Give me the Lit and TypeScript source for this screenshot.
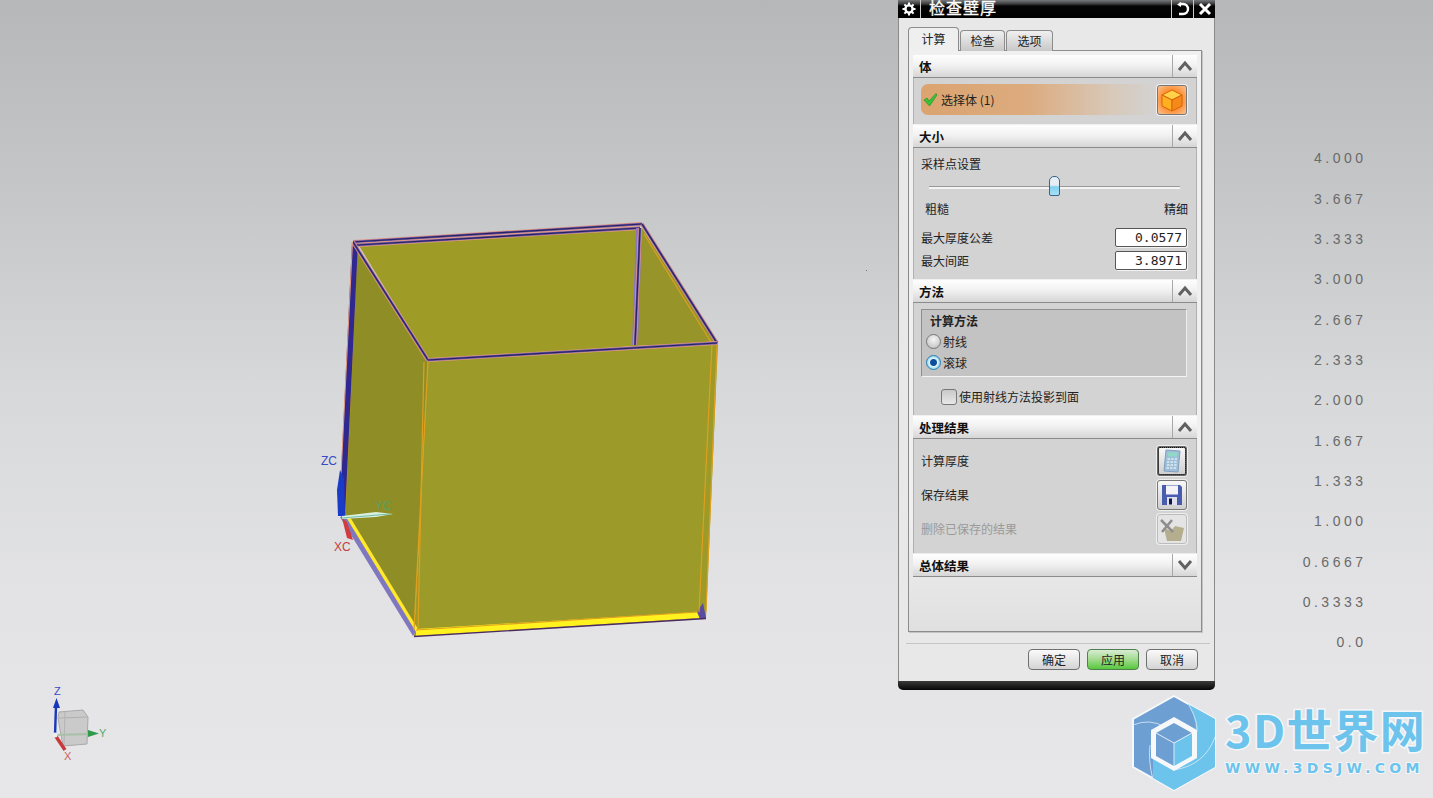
import { LitElement, html, css, svg } from 'lit';
import { customElement } from 'lit/decorators.js';

const LEGEND = ['4.000', '3.667', '3.333', '3.000', '2.667', '2.333', '2.000', '1.667', '1.333', '1.000', '0.6667', '0.3333', '0.0'];

// rim edge of the shell: pink outline, dark core, purple inner side
const rim = (x1: number, y1: number, x2: number, y2: number) => svg`
  <line x1=${x1} y1=${y1} x2=${x2} y2=${y2} stroke="#e09a84" stroke-width="3.8"/>
  <line x1=${x1} y1=${y1} x2=${x2} y2=${y2} stroke="#6d58a8" stroke-width="2.4"/>
  <line x1=${x1} y1=${y1} x2=${x2} y2=${y2} stroke="#262060" stroke-width="1.2"/>
`;

const orange = (x1: number, y1: number, x2: number, y2: number) => svg`
  <line x1=${x1} y1=${y1} x2=${x2} y2=${y2} stroke="#e0a01e" stroke-width="1.2"/>
`;

const chevron = (up: boolean) => html`
  <svg width="16" height="12" viewBox="0 0 16 12">
    <polyline points=${up ? '2,10 8,3 14,10' : '2,2 8,9 14,2'} fill="none" stroke="#606060" stroke-width="3"/>
  </svg>`;

@customElement('app-root')
export class AppRoot extends LitElement {
  static styles = css`
    :host {
      display: block;
      width: 1433px;
      height: 798px;
      overflow: hidden;
      position: relative;
      font-family: "Noto Sans CJK SC", "Liberation Sans", sans-serif;
      font-size: 12px;
      color: #222;
      background: linear-gradient(180deg, #b5b7b9 0%, #c6c7c9 25%, #d8d9db 50%, #e3e3e5 75%, #e7e7e9 100%);
    }
    .scene { position: absolute; left: 0; top: 0; }

    .legend {
      position: absolute;
      right: 70px;
      top: 148.3px;
      display: flex;
      flex-direction: column;
      align-items: flex-end;
      font-family: "Liberation Sans", sans-serif;
      font-size: 14px;
      letter-spacing: 3.5px;
      color: #6a6a6a;
    }
    .legend div { height: 40.33px; line-height: 20px; margin-right: -3.5px; }

    .dialog {
      position: absolute;
      left: 898px;
      top: 0;
      width: 317px;
      height: 690px;
      display: flex;
      flex-direction: column;
    }
    .titlebar {
      height: 18px;
      flex: none;
      display: flex;
      color: #fff;
      background: linear-gradient(180deg, #77787a 0, #3a3a3a 4px, #050505 6px, #000 100%);
    }
    .titlebar .gear { width: 23px; display: flex; justify-content: center; align-items: center; border-right: 1px solid #ccc; box-sizing: border-box; }
    .titlebar .name { flex: 1; padding-left: 8px; font-size: 16px; line-height: 14px; letter-spacing: 1px; -webkit-text-stroke: 0.3px #fff; }
    .titlebar .tool { width: 22px; display: flex; justify-content: center; align-items: center; border-left: 1px solid #ccc; box-sizing: border-box; }
    .body {
      flex: 1;
      box-sizing: border-box;
      padding: 9px 12px 0 9px;
      display: flex;
      flex-direction: column;
      border-left: 1px solid #8a8a8a;
      border-right: 1px solid #8a8a8a;
      background: #e8e8e8;
    }
    .tabs { display: flex; height: 24px; align-items: flex-end; flex: none; position: relative; z-index: 1; margin-bottom: -1px; }
    .tab {
      width: 45px;
      height: 21px;
      box-sizing: border-box;
      margin-left: 1px;
      padding-bottom: 2px;
      display: flex;
      align-items: center;
      justify-content: center;
      border: 1px solid #8c8c8c;
      border-bottom: none;
      border-radius: 4px 4px 0 0;
      background: linear-gradient(180deg, #f0f0f0, #c8c8c8);
    }
    .tab.last { width: 47px; margin-left: 1px; }
    .tab.active {
      margin-left: 0;
      height: 24px;
      width: 51px;
      background: #efefef;
    }
    .panel {
      height: 582px;
      flex: none;
      box-sizing: border-box;
      padding: 4px 4px 0;
      border: 1px solid #8c8c8c;
      background: linear-gradient(180deg, #f0f0f0 80%, #e0e0e0 100%);
      box-shadow: 1px 1px 0 #c4c4c4;
    }
    .head {
      height: 23px;
      box-sizing: border-box;
      display: flex;
      align-items: center;
      justify-content: space-between;
      padding-left: 6px;
      font-weight: 700;
      font-size: 12.5px;
      color: #111;
      border-bottom: 1px solid #8b8b8b;
      background: linear-gradient(180deg, #fefefe 0%, #f2f2f2 45%, #d6d6d6 100%);
    }
    .head .toggle {
      width: 24px;
      height: 22px;
      display: flex;
      align-items: center;
      justify-content: center;
      border-left: 1px solid #a8a8a8;
    }
    .content { background: #d3d3d3; box-sizing: border-box; padding: 0 9px 0 7px; margin-bottom: 1px; border-left: 1px solid #b0b0b0; border-right: 1px solid #b0b0b0; }

    .select-row { height: 46px; padding-top: 6px; display: flex; align-items: flex-start; justify-content: space-between; }
    .select-bar {
      width: 236px;
      height: 31px;
      box-sizing: border-box;
      padding-left: 2px;
      display: flex;
      align-items: center;
      gap: 3px;
      border-radius: 7px;
      background: linear-gradient(90deg, #dba470 0%, #dcab7e 45%, #d8c8b8 80%, #d3d3d3 100%);
    }
    .icon-btn {
      width: 30px;
      height: 30px;
      flex: none;
      box-sizing: border-box;
      display: flex;
      align-items: center;
      justify-content: center;
      border: 1px solid #777;
      border-radius: 3px;
      background: linear-gradient(180deg, #f8f8f8, #cfcfcf);
      box-shadow: 0 0 0 1px #eee;
    }
    .icon-btn.hot { margin-top: 1px; background: radial-gradient(circle, #ff7e14 35%, #f8c496 100%); }
    .icon-btn.focus { border: 2px solid #666; outline: 1px dotted #111; outline-offset: -2px; }
    .icon-btn.off { border-color: #bcbcbc; background: #e4e4e4; }

    .size { height: 131px; }
    .size .caption { height: 32px; padding-top: 6px; box-sizing: border-box; line-height: 20px; }
    .slider { height: 14px; margin: 0 7px 1px 8px; position: relative; display: flex; align-items: center; }
    .track { flex: 1; height: 3px; background: #f4f4f4; border-top: 1px solid #999; box-sizing: border-box; }
    .thumb {
      position: absolute;
      left: 120px;
      top: -4px;
      width: 11px;
      height: 20px;
      box-sizing: border-box;
      border: 1px solid #39648c;
      border-radius: 5px 5px 2px 2px;
      background: linear-gradient(180deg, #e6eef4 0 45%, #7fd0f2 55%, #a8e0f6 100%);
    }
    .ends { display: flex; justify-content: space-between; padding: 4px 0 0 4px; margin-right: -1px; height: 26px; box-sizing: border-box; line-height: 20px; }
    .field { display: flex; justify-content: space-between; align-items: center; height: 23px; }
    .field.first { margin-top: 5px; }
    .input {
      width: 72px;
      height: 19px;
      box-sizing: border-box;
      padding-right: 4px;
      text-align: right;
      font-family: "DejaVu Sans Mono", monospace;
      font-size: 13px;
      line-height: 17px;
      background: #fff;
      border: 1px solid #555;
      border-radius: 2px;
      box-shadow: 1px 1px 0 #f2f2f2;
    }

    .method { height: 112px; padding-top: 6px; }
    .group {
      height: 68px;
      box-sizing: border-box;
      padding: 1px 0 0 4px;
      background: #c3c3c3;
      border: 1px solid #8f8f8f;
      border-right-color: #eee;
      border-bottom-color: #f4f4f4;
    }
    .group .title { font-weight: 700; line-height: 20px; padding-left: 4px; }
    .radio { display: flex; align-items: center; height: 21px; gap: 2px; }
    .dot {
      width: 15px;
      height: 15px;
      box-sizing: border-box;
      border-radius: 50%;
      border: 1px solid #777;
      background: radial-gradient(circle at 50% 35%, #f4f4f4, #bbb);
    }
    .dot.on {
      border-color: #2a7fb0;
      background: radial-gradient(circle, #0d4f9a 0 3px, #e8f4fa 4px, #7fd0f0 7px);
    }
    .check { display: flex; align-items: center; gap: 2px; margin: 11px 0 0 20px; }
    .box {
      width: 16px;
      height: 16px;
      box-sizing: border-box;
      border: 1px solid #777;
      border-radius: 3px;
      background: linear-gradient(180deg, #c8c8c8, #e8e8e8);
    }

    .result { height: 114px; padding-top: 7px; display: flex; flex-direction: column; gap: 4px; }
    .result .row { display: flex; justify-content: space-between; align-items: center; height: 30px; }
    .result .row span { position: relative; top: -1px; }
    .muted { color: #9a9a9a; }

    .footer { border-top: 1px solid #c6c6c6; margin: 11px -8px 0 -2px; display: flex; justify-content: flex-end; gap: 7px; padding: 5px 12px 0 0; flex: none; }
    .btn {
      width: 52px;
      height: 21px;
      box-sizing: border-box;
      display: flex;
      align-items: center;
      justify-content: center;
      border: 1px solid #707070;
      border-radius: 4px;
      background: linear-gradient(180deg, #fafafa, #d4d4d4);
    }
    .btn.primary { border-color: #4f7f4f; background: linear-gradient(180deg, #d8ecd4 0%, #a8dc94 45%, #58c83e 100%); }
    .foot-bar {
      height: 9px;
      flex: none;
      background: linear-gradient(180deg, #3a3a3a, #050505);
      border-radius: 0 0 5px 5px;
    }

    .logo { position: absolute; left: 1132px; top: 695px; display: flex; align-items: flex-start; gap: 8px; }
    .brand { padding-top: 12px; display: flex; flex-direction: column; align-items: flex-start; }
    .brand .big {
      font-family: "Noto Sans CJK SC", sans-serif;
      font-weight: 700;
      font-size: 45px;
      line-height: 44px;
      letter-spacing: 1.5px;
      color: #6cc3ec;
      -webkit-text-stroke: 3px #f4f6f8;
      paint-order: stroke fill;
      white-space: nowrap;
    }
    .brand .url {
      margin-top: 10px;
      font-family: "DejaVu Sans", sans-serif;
      font-weight: 700;
      font-size: 14px;
      line-height: 14px;
      letter-spacing: 4.3px;
      color: #6cc3ec;
      -webkit-text-stroke: 2px #f4f6f8;
      paint-order: stroke fill;
      white-space: nowrap;
    }
  `;

  private renderModel() {
    return html`
      <svg class="scene" width="1433" height="798" viewBox="0 0 1433 798">
        <rect x="866" y="270" width="1" height="1" fill="#777"/>
        <!-- shell faces -->
        <polygon points="353,244 428,360 414,634 341,517" fill="#8f8d26"/>
        <polygon points="358,244 640,227 636,346 429,360" fill="#9e9c27"/>
        <polygon points="642,228 716,343 635,346" fill="#97942a"/>
        <polygon points="428,361 718,343 706,618 414,636" fill="#9c9a29"/>

        <!-- bottom strips -->
        <polygon points="416,629 698,612 700,618 416,636" fill="#fff21e"/>
        <polygon points="344,517 350,517 418,629 414,634" fill="#ffe92a"/>
        <polygon points="340,517 346,517 416,632 413,636" fill="#7f78c0"/>
        <polygon points="697,612 703,603 706,618 700,619" fill="#5a4aa0"/>
        <line x1="414" y1="636.5" x2="706" y2="618.5" stroke="#4a2a60" stroke-width="1.4"/>

        <!-- inner orange edges -->
        ${orange(357, 250, 345, 512)}
        ${orange(358, 252, 426, 360)}
        ${orange(644, 234, 711, 342)}
        ${orange(428, 361, 414, 630)}
        ${orange(424, 362, 418, 630)}
        ${orange(712, 344, 699, 612)}
        ${orange(717, 344, 706, 612)}
        ${orange(416, 630, 698, 612)}

        <!-- rims -->
        <polygon points="352,242 358,243 345,516 339,516" fill="#2e2890"/>
        ${rim(353, 242, 642, 224)}
        ${rim(358, 245, 640, 228)}
        ${rim(353, 242, 428, 360)}
        ${rim(642, 224, 717, 343)}
        ${rim(428, 360, 717, 343)}
        <polygon points="636,228 642,228 638,345 632,345" fill="#8d78c0"/>
        ${rim(640, 228, 635, 345)}
        <line x1="352.5" y1="242" x2="339" y2="516" stroke="#e59a80" stroke-width="1"/>

        <!-- work coordinate system -->
        <path d="M340,470 L337,490 L338,516 L345,516 L344,478 Z" fill="#1a3ac8"/>
        <polygon points="342,518 347,522 353,540 347,538" fill="#d23c3c"/>
        <polygon points="342,516 376,512 393,514 376,517 342,519" fill="#d8f0dc"/>
        <line x1="342" y1="518" x2="390" y2="514" stroke="#58b0a0" stroke-width="0.8"/>
        <text x="321" y="465" font-family="Liberation Sans, sans-serif" font-size="12" fill="#3848c8">ZC</text>
        <text x="375" y="510" font-family="Liberation Sans, sans-serif" font-size="12" fill="#5aa060">YC</text>
        <text x="334" y="551" font-family="Liberation Sans, sans-serif" font-size="12" fill="#c83c3c">XC</text>

        <!-- absolute triad -->
        <polygon points="59,712 83,710 88,717 87,744 63,746 58,718" fill="#c9cac9" stroke="#a8a9a8"/>
        <polyline points="59,718 88,717 M59,718" fill="none" stroke="#b0b0b0"/>
        <line x1="65" y1="712" x2="64" y2="746" stroke="#b4b4b4"/>
        <line x1="55" y1="735" x2="90" y2="734" stroke="#a8c0a8" stroke-width="2"/>
        <polygon points="88,730 99,733.5 88,737" fill="#2f9a4a"/>
        <line x1="55" y1="735" x2="56" y2="706" stroke="#1838b8" stroke-width="2.4"/>
        <polygon points="56.5,698 60,708 53,708" fill="#1838b8"/>
        <line x1="55" y1="735" x2="65" y2="750" stroke="#c83a3a" stroke-width="3.4"/>
        <circle cx="55" cy="735" r="2.5" fill="#eee"/>
        <text x="54" y="695" font-family="Liberation Sans, sans-serif" font-size="11" fill="#3848c8">Z</text>
        <text x="99" y="737" font-family="Liberation Sans, sans-serif" font-size="11" fill="#58a870">Y</text>
        <text x="64" y="760" font-family="Liberation Sans, sans-serif" font-size="11" fill="#d06060">X</text>
      </svg>`;
  }

  private renderLogo() {
    return html`
      <div class="logo">
        <svg width="85" height="97" viewBox="1132 695 85 97">
          <polygon points="1174,696 1215,719 1215,767 1174,790 1133,767 1133,719" fill="#6e9fd3" stroke="#f6f8fa" stroke-width="2"/>
          <path d="M1188,704 L1215,719 L1215,767 L1174,790 L1153,778 L1153,757 L1174,769 L1196,757 L1196,732 Q1196,716 1188,704 Z" fill="#6cc3ec"/>
          <path d="M1189,705 Q1200,725 1196,735 M1215,737 Q1205,765 1174,770 M1133,725 Q1150,718 1165,727 M1153,780 Q1148,760 1150,745" fill="none" stroke="#dfeef8" stroke-width="0.8"/>
          <polygon points="1174,717 1197,730 1197,758 1174,771 1151,758 1151,730" fill="#f6f8fa"/>
          <polygon points="1174,723 1192,733 1174,743 1156,733" fill="#6e9fd3"/>
          <polygon points="1156,733 1174,743 1174,766 1156,756" fill="#6e9fd3"/>
          <polygon points="1192,733 1192,756 1174,766 1174,743" fill="#6cc3ec"/>
          <path d="M1156,733 L1174,743 L1192,733 M1174,743 L1174,766" fill="none" stroke="#f6f8fa" stroke-width="0.8"/>
        </svg>
        <div class="brand">
          <div class="big">3D世界网</div>
          <div class="url">WWW.3DSJW.COM</div>
        </div>
      </div>`;
  }

  private section(title: string, body: unknown, open = true) {
    return html`
      <div class="head">
        <span>${title}</span>
        <span class="toggle">${chevron(open)}</span>
      </div>
      ${body}`;
  }

  private renderDialog() {
    const select = html`
      <div class="content select-row">
        <div class="select-bar">
          <svg width="15" height="15" viewBox="0 0 15 15"><path d="M1,8 L4,6 L6,9 L13,1.5 L14,3 L6.5,14 Z" fill="#35c435" stroke="#1e8a1e" stroke-width="0.6"/></svg>
          <span>选择体 (1)</span>
        </div>
        <div class="icon-btn hot">
          <svg width="24" height="24" viewBox="0 0 24 24">
            <polygon points="12,2 22,7 12,12 2,7" fill="#ffd24a" stroke="#d8640a"/>
            <polygon points="2,7 12,12 12,23 2,18" fill="#ffb020" stroke="#d8640a"/>
            <polygon points="22,7 22,18 12,23 12,12" fill="#f58a1a" stroke="#d8640a"/>
          </svg>
        </div>
      </div>`;

    const size = html`
      <div class="content size">
        <div class="caption">采样点设置</div>
        <div class="slider"><div class="track"></div><div class="thumb"></div></div>
        <div class="ends"><span>粗糙</span><span>精细</span></div>
        <div class="field first"><span>最大厚度公差</span><div class="input">0.0577</div></div>
        <div class="field"><span>最大间距</span><div class="input">3.8971</div></div>
      </div>`;

    const method = html`
      <div class="content method">
        <div class="group">
          <div class="title">计算方法</div>
          <div class="radio"><span class="dot"></span>射线</div>
          <div class="radio"><span class="dot on"></span>滚球</div>
        </div>
        <div class="check"><span class="box"></span>使用射线方法投影到面</div>
      </div>`;

    const result = html`
      <div class="content result">
        <div class="row">
          <span>计算厚度</span>
          <div class="icon-btn focus">
            <svg width="20" height="24" viewBox="0 0 20 24">
              <polygon points="4,1 18,2 16,23 2,22" fill="#9ebfd8" stroke="#7f9fc0"/>
              <rect x="6" y="3.5" width="9" height="4" fill="#90d8c8"/>
              <path d="M5.5,10 H15 M5,13 H15 M5,16 H14.5 M4.5,19 H14.5" stroke="#e2ecf4" stroke-width="1.6" stroke-dasharray="2.4 1.2"/>
            </svg>
          </div>
        </div>
        <div class="row">
          <span>保存结果</span>
          <div class="icon-btn">
            <svg width="22" height="22" viewBox="0 0 22 22">
              <path d="M1,1 H19 L21,3 V21 H1 Z" fill="#4a5cb0"/>
              <rect x="5" y="1.5" width="12" height="9" fill="#f4f4f8"/>
              <rect x="6" y="13" width="10" height="8" fill="#dfe2ee"/>
              <rect x="8" y="14.5" width="3" height="6" fill="#101840"/>
            </svg>
          </div>
        </div>
        <div class="row">
          <span class="muted">删除已保存的结果</span>
          <div class="icon-btn off">
            <svg width="26" height="24" viewBox="0 0 26 24">
              <path d="M5,11 L12,14 L16,9 L25,11 L22,24 H8 Z" fill="#b4ae8e"/>
              <path d="M2,3 L14,15 M13,3 L3,15" stroke="#8e8e8e" stroke-width="2.6" fill="none"/>
            </svg>
          </div>
        </div>
      </div>`;

    return html`
      <div class="dialog">
        <div class="titlebar">
          <div class="gear">
            <svg width="14" height="14" viewBox="0 0 14 14">
              <circle cx="7" cy="7" r="3.6" fill="none" stroke="#fff" stroke-width="2.4"/>
              <path d="M7,0.5 V3 M7,11 V13.5 M0.5,7 H3 M11,7 H13.5 M2.4,2.4 L4,4 M10,10 L11.6,11.6 M11.6,2.4 L10,4 M4,10 L2.4,11.6" stroke="#fff" stroke-width="2"/>
            </svg>
          </div>
          <div class="name">检查壁厚</div>
          <div class="tool">
            <svg width="14" height="14" viewBox="0 0 14 14">
              <path d="M3,2 H7 A4.6,4.6 0 0 1 7,12 H3" fill="none" stroke="#fff" stroke-width="2.4"/>
              <polygon points="5,0 5,5 1,2.5" fill="#fff"/>
            </svg>
          </div>
          <div class="tool">
            <svg width="14" height="14" viewBox="0 0 14 14">
              <path d="M2,2 L12,12 M12,2 L2,12" stroke="#fff" stroke-width="3"/>
            </svg>
          </div>
        </div>
        <div class="body">
          <div class="tabs">
            <div class="tab active">计算</div>
            <div class="tab">检查</div>
            <div class="tab last">选项</div>
          </div>
          <div class="panel">
            ${this.section('体', select)}
            ${this.section('大小', size)}
            ${this.section('方法', method)}
            ${this.section('处理结果', result)}
            ${this.section('总体结果', '', false)}
          </div>
          <div class="footer">
            <div class="btn">确定</div>
            <div class="btn primary">应用</div>
            <div class="btn">取消</div>
          </div>
        </div>
        <div class="foot-bar"></div>
      </div>`;
  }

  render() {
    return html`
      ${this.renderModel()}
      <div class="legend">${LEGEND.map((v) => html`<div>${v}</div>`)}</div>
      ${this.renderDialog()}
      ${this.renderLogo()}
    `;
  }
}
